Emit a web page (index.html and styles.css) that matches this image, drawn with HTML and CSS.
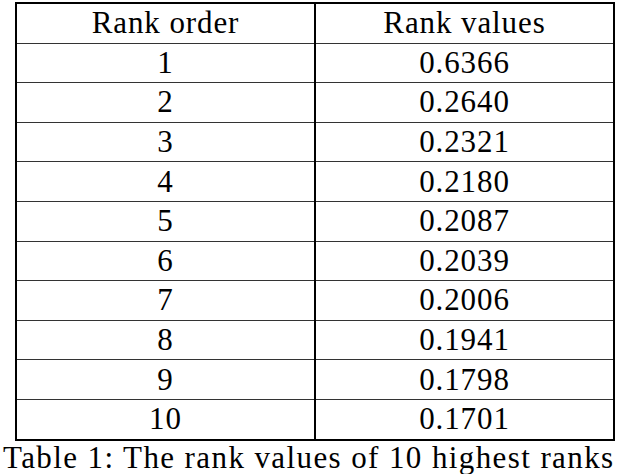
FILE: index.html
```html
<!doctype html>
<html lang="en">
  <head>
    <meta charset="UTF-8" />
    <meta name="viewport" content="width=device-width, initial-scale=1.0" />
    <title>Table 1</title>
    <link rel="stylesheet" href="styles.css">
  </head>
  <body>
    <table class="rank-table">
      <tr><td>Rank order</td><td>Rank values</td></tr>
      <tr><td>1</td><td>0.6366</td></tr>
      <tr><td>2</td><td>0.2640</td></tr>
      <tr><td>3</td><td>0.2321</td></tr>
      <tr><td>4</td><td>0.2180</td></tr>
      <tr><td>5</td><td>0.2087</td></tr>
      <tr><td>6</td><td>0.2039</td></tr>
      <tr><td>7</td><td>0.2006</td></tr>
      <tr><td>8</td><td>0.1941</td></tr>
      <tr><td>9</td><td>0.1798</td></tr>
      <tr><td>10</td><td>0.1701</td></tr>
    </table>
    <div class="caption">Table 1: The rank values of 10 highest ranks</div>
  </body>
</html>
```

FILE: styles.css
```css
body {
  font-family: "Liberation Serif", "Times New Roman", serif;
  color: #000;
  background: #fff;
  margin: 0;
  padding-top: 2px;
}
.rank-table {
  border-collapse: collapse;
  margin-left: 15px;
  width: 600px;
  border: 2px solid #000;
  font-size: 31px;
  letter-spacing: 0.9px;
}
.rank-table td {
  width: 50%;
  height: 38.6px;
  padding: 0;
  text-align: center;
  vertical-align: middle;
  line-height: 34px;
  border-top: 1.5px solid #333;
}
.rank-table td + td {
  border-left: 2px solid #000;
}
.caption {
  padding-left: 3px;
  font-size: 31px;
  line-height: 33px;
  letter-spacing: 1.4px;
  white-space: nowrap;
}
```
